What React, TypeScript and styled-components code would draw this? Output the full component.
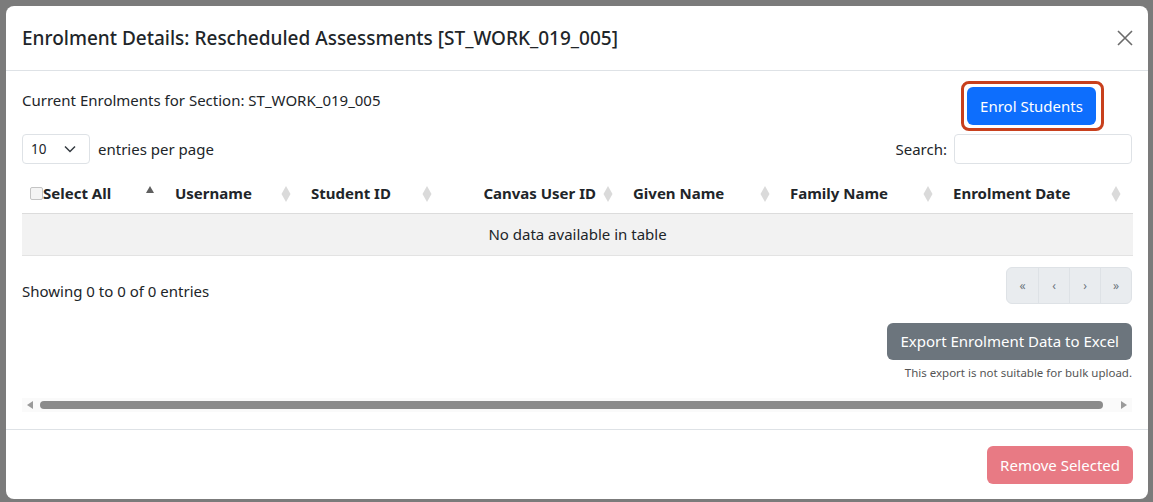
import * as React from 'react'
import styled, { createGlobalStyle, css } from 'styled-components'

const FONT = '"Noto Sans", "Open Sans", Arial, sans-serif'

const GlobalStyle = createGlobalStyle`
  html, body {
    margin: 0;
    padding: 0;
    background: #7b7b7b;
    font-family: ${FONT};
    color: #212529;
  }
  * { box-sizing: border-box; }
`

const Backdrop = styled.div`
  padding: 6px 5px 3px 6px;
  height: 502px;
`
const Modal = styled.div`
  background: #fff;
  border-radius: 8px;
  height: 493px;
  display: flex;
  flex-direction: column;
  overflow: hidden;
`
const Header = styled.div`
  height: 65px;
  flex-shrink: 0;
  display: flex;
  align-items: center;
  justify-content: space-between;
  padding: 0 15px 0 16px;
  border-bottom: 1px solid #dee2e6;
`
const Title = styled.h5`
  margin: 0;
  font-size: 19px;
  font-weight: 500;
  line-height: 1.2;
  padding-top: 1px;
`
const Close = styled.button`
  border: 0;
  background: transparent;
  padding: 0;
  width: 16px;
  height: 16px;
  display: flex;
  cursor: pointer;
`
const Body = styled.div`
  flex: 1;
  padding: 16px 16px 0 16px;
  font-size: 15px;
`
const TopRow = styled.div`
  display: flex;
  justify-content: space-between;
  align-items: flex-start;
  padding-right: 36px;
`
const SectionText = styled.div`
  line-height: 21px;
  margin-top: 3px;
`
const Highlight = styled.span`
  position: relative;
  display: inline-flex;
  &::after {
    content: '';
    position: absolute;
    left: -6px;
    right: -8px;
    top: -6px;
    bottom: -6px;
    border: 3px solid #c8401d;
    border-radius: 8px;
  }
`
type Variant = 'primary' | 'secondary' | 'danger'
const Button = styled.button<{ $variant: Variant }>`
  border: 0;
  border-radius: 6px;
  font-family: ${FONT};
  font-size: 15px;
  color: #fff;
  height: 38px;
  padding: 0 13px;
  cursor: pointer;
  ${(p) => p.$variant === 'primary' && css`
    background: #0d6efd;
    width: 129px;
    padding: 0;
  `}
  ${(p) => p.$variant === 'secondary' && css`
    background: #6c757d;
    height: 37px;
  `}
  ${(p) => p.$variant === 'danger' && css`
    background: #e87a84;
  `}
`
const ControlsRow = styled.div`
  display: flex;
  justify-content: space-between;
  align-items: center;
  margin-top: 9px;
`
const Length = styled.label`
  display: flex;
  align-items: center;
  gap: 8px;
`
const Select = styled.div`
  width: 68px;
  height: 30px;
  border: 1px solid #dee2e6;
  border-radius: 4px;
  display: flex;
  align-items: center;
  justify-content: space-between;
  padding: 0 13px 0 8px;
  font-size: 13.5px;
`
const Search = styled.label`
  display: flex;
  align-items: center;
  gap: 7px;
`
const Input = styled.input`
  width: 178px;
  height: 30px;
  border: 1px solid #dee2e6;
  border-radius: 4px;
`
const Table = styled.table`
  width: 1111px;
  margin-top: 10px;
  border-collapse: collapse;
  table-layout: fixed;
`
const Col = styled.col<{ $w: number }>`
  width: ${(p) => p.$w}px;
`
const Th = styled.th<{ $right?: boolean }>`
  position: relative;
  height: 39px;
  padding: 0 8px;
  font-size: 15px;
  font-weight: 700;
  text-align: ${(p) => (p.$right ? 'right' : 'left')};
  padding-right: ${(p) => (p.$right ? '29px' : '8px')};
  border-bottom: 1px solid #dcdcdc;
  white-space: nowrap;
`
const SortIcon = styled.span`
  position: absolute;
  right: 12px;
  top: 11px;
  display: flex;
`
const Check = styled.span`
  display: inline-block;
  width: 13px;
  height: 13px;
  border: 1px solid #c4c4c4;
  border-radius: 2px;
  background: #f4f4f4;
  vertical-align: -1px;
`
const EmptyCell = styled.td`
  height: 42px;
  background: #f2f2f2;
  text-align: center;
  border-bottom: 1px solid #e3e3e3;
  font-size: 15px;
`
const InfoRow = styled.div`
  display: flex;
  justify-content: space-between;
  align-items: flex-start;
  margin-top: 11px;
`
const Info = styled.div`
  margin-top: 14px;
  line-height: 20px;
`
const Pager = styled.div`
  display: flex;
  border: 1px solid #dee2e6;
  border-radius: 6px;
  overflow: hidden;
  background: #e9ecef;
`
const PageBtn = styled.span`
  width: 31px;
  height: 35px;
  display: flex;
  align-items: center;
  justify-content: center;
  color: #6c757d;
  font-size: 12px;
  & + & {
    border-left: 1px solid #dee2e6;
  }
`
const ExportBlock = styled.div`
  display: flex;
  flex-direction: column;
  align-items: flex-end;
  margin-top: 19px;
`
const Note = styled.div`
  font-size: 11.5px;
  color: #555;
  margin-top: 5px;
  line-height: 16px;
`
const Scrollbar = styled.div`
  display: flex;
  align-items: center;
  gap: 7px;
  height: 14px;
  margin-top: 17px;
  padding: 0 5px;
  background: #fafafa;
`
const Thumb = styled.div`
  flex: 1;
  height: 8px;
  border-radius: 4px;
  background: #8b8b8b;
  margin-right: 11px;
`
const Footer = styled.div`
  height: 70px;
  flex-shrink: 0;
  border-top: 1px solid #dee2e6;
  display: flex;
  justify-content: flex-end;
  align-items: flex-start;
  padding: 16px 15px 0;
`

const SortArrows = ({ active }: { active?: boolean }) => (
  <svg width="10" height="18" viewBox="0 0 10 18">
    {active ? (
      <path d="M5 1 L9 8 L1 8 Z" fill="#5f5f5f" />
    ) : (
      <path d="M5 1 L9.5 9 L5 17 L0.5 9 Z" fill="#dadada" />
    )}
  </svg>
)

const columns = [
  { label: 'Username', width: 136 },
  { label: 'Student ID', width: 141 },
  { label: 'Canvas User ID', width: 181, right: true },
  { label: 'Given Name', width: 157 },
  { label: 'Family Name', width: 163 },
  { label: 'Enrolment Date', width: 188 },
]

const App = () => (
  <Backdrop>
    <GlobalStyle />
    <Modal>
      <Header>
        <Title>Enrolment Details: Rescheduled Assessments [ST_WORK_019_005]</Title>
        <Close aria-label="Close">
          <svg width="16" height="16" viewBox="0 0 16 16">
            <path d="M1 1 L15 15 M15 1 L1 15" stroke="#6b6b6b" strokeWidth="1.6" />
          </svg>
        </Close>
      </Header>
      <Body>
        <TopRow>
          <SectionText>Current Enrolments for Section: ST_WORK_019_005</SectionText>
          <Highlight>
            <Button $variant="primary">Enrol Students</Button>
          </Highlight>
        </TopRow>
        <ControlsRow>
          <Length>
            <Select>
              <span>10</span>
              <svg width="12" height="8" viewBox="0 0 12 8">
                <path d="M1 1.5 L6 6.5 L11 1.5" stroke="#343a40" strokeWidth="1.5" fill="none" />
              </svg>
            </Select>
            entries per page
          </Length>
          <Search>
            Search:
            <Input type="search" />
          </Search>
        </ControlsRow>
        <Table>
          <colgroup>
            <Col $w={145} />
            {columns.map((c) => (
              <Col key={c.label} $w={c.width} />
            ))}
          </colgroup>
          <thead>
            <tr>
              <Th>
                <Check />
                Select All
                <SortIcon>
                  <SortArrows active />
                </SortIcon>
              </Th>
              {columns.map((c) => (
                <Th key={c.label} $right={c.right}>
                  {c.label}
                  <SortIcon>
                    <SortArrows />
                  </SortIcon>
                </Th>
              ))}
            </tr>
          </thead>
          <tbody>
            <tr>
              <EmptyCell colSpan={7}>No data available in table</EmptyCell>
            </tr>
          </tbody>
        </Table>
        <InfoRow>
          <Info>Showing 0 to 0 of 0 entries</Info>
          <Pager>
            <PageBtn>«</PageBtn>
            <PageBtn>‹</PageBtn>
            <PageBtn>›</PageBtn>
            <PageBtn>»</PageBtn>
          </Pager>
        </InfoRow>
        <ExportBlock>
          <Button $variant="secondary">Export Enrolment Data to Excel</Button>
          <Note>This export is not suitable for bulk upload.</Note>
        </ExportBlock>
        <Scrollbar>
          <svg width="6" height="8" viewBox="0 0 6 8">
            <path d="M0 4 L6 0 L6 8 Z" fill="#9a9a9a" />
          </svg>
          <Thumb />
          <svg width="6" height="8" viewBox="0 0 6 8">
            <path d="M6 4 L0 0 L0 8 Z" fill="#9a9a9a" />
          </svg>
        </Scrollbar>
      </Body>
      <Footer>
        <Button $variant="danger">Remove Selected</Button>
      </Footer>
    </Modal>
  </Backdrop>
)

export default App
